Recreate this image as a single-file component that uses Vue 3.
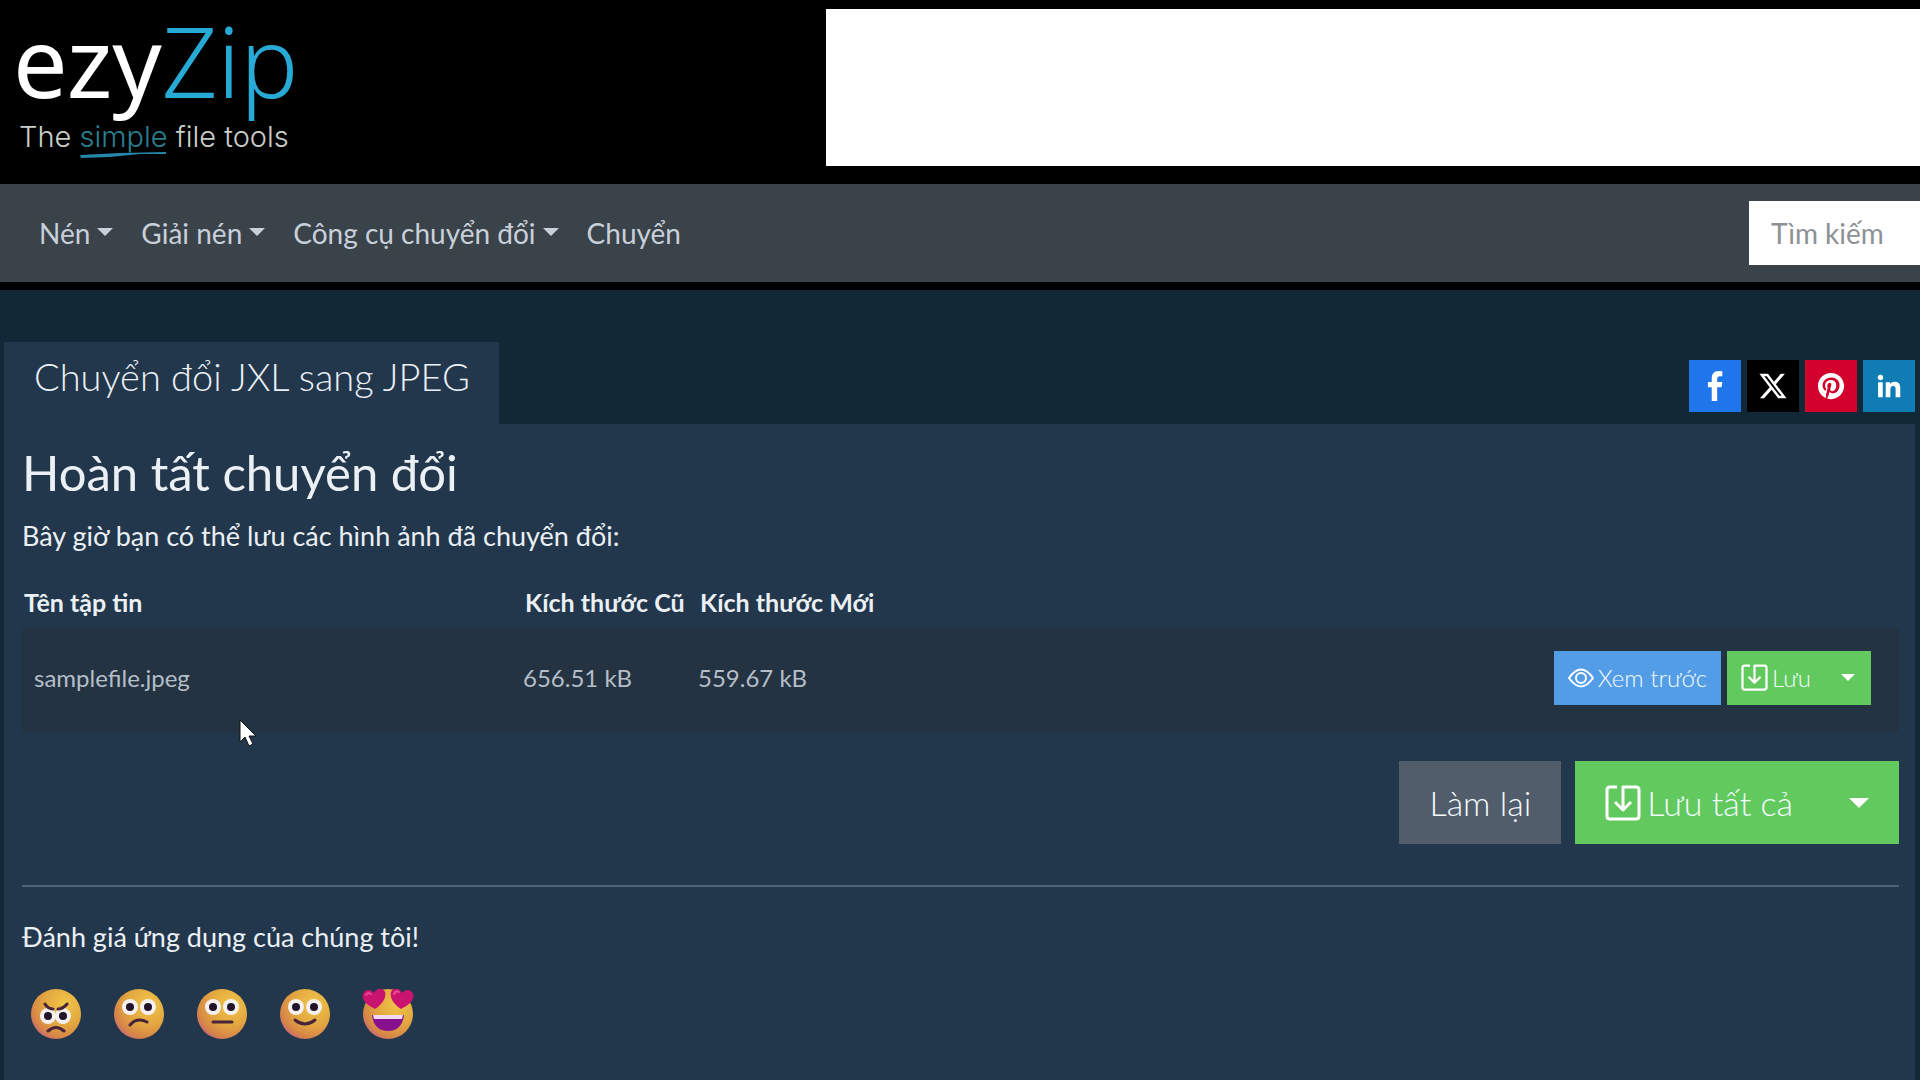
<template>
  <div class="page">
    <header class="header">
      <a class="logo" href="#" aria-label="ezyZip">
        <span class="logo-name">ezy<span class="logo-zip">Zip</span></span>
        <span class="logo-tagline">The <span class="logo-simple">simple<svg class="logo-stroke" viewBox="0 0 86 8" preserveAspectRatio="none" aria-hidden="true">
          <path d="M1 4 L40 2 L85 1 L85 3 L60 3 L30 6 L2 7 Z" fill="#2487ab" />
        </svg></span> file tools</span>
      </a>
      <div class="banner"></div>
    </header>

    <nav class="navbar">
      <ul class="menu">
        <li v-for="item in menu" :key="item.label">
          <a href="#" class="menu-link" :class="{ dropdown: item.dropdown }">{{ item.label }}</a>
        </li>
      </ul>
      <input class="search" type="search" placeholder="Tìm kiếm" aria-label="Tìm kiếm" />
    </nav>

    <main class="main">
      <div class="tab-row">
        <h1 class="tab">Chuyển đổi JXL sang JPEG</h1>
        <div class="share">
          <a v-for="s in socials" :key="s.name" href="#" class="share-link" :class="s.name" :aria-label="s.name">
            <svg :viewBox="s.box" aria-hidden="true"><path :d="s.path" fill="#fff" /></svg>
          </a>
        </div>
      </div>

      <section class="panel">
        <h2 class="title">Hoàn tất chuyển đổi</h2>
        <p class="lead">Bây giờ bạn có thể lưu các hình ảnh đã chuyển đổi:</p>

        <table class="files">
          <thead>
            <tr>
              <th class="col-name">Tên tập tin</th>
              <th class="col-old">Kích thước Cũ</th>
              <th class="col-new">Kích thước Mới</th>
              <th></th>
            </tr>
          </thead>
          <tbody>
            <tr v-for="file in files" :key="file.name">
              <td class="file-name">{{ file.name }}</td>
              <td>{{ file.oldSize }}</td>
              <td>{{ file.newSize }}</td>
              <td>
                <div class="row-actions">
                  <button class="btn btn-blue">
                    <svg class="icon-eye" viewBox="0 0 26 20" aria-hidden="true">
                      <path d="M1 10 Q13 -7 25 10 Q13 27 1 10 Z" />
                      <circle cx="13" cy="10" r="5" />
                    </svg>
                    Xem trước
                  </button>
                  <div class="btn-group">
                    <button class="btn btn-green">
                      <svg class="icon-save" viewBox="0 0 36 36" aria-hidden="true"><path :d="savePath" /></svg>
                      Lưu
                    </button>
                    <button class="btn btn-green btn-caret" aria-label="Tùy chọn lưu"></button>
                  </div>
                </div>
              </td>
            </tr>
          </tbody>
        </table>

        <div class="actions">
          <button class="btn btn-lg btn-gray">Làm lại</button>
          <div class="btn-group">
            <button class="btn btn-lg btn-green">
              <svg class="icon-save" viewBox="0 0 36 36" aria-hidden="true"><path :d="savePath" /></svg>
              Lưu tất cả
            </button>
            <button class="btn btn-lg btn-green btn-caret" aria-label="Tùy chọn lưu tất cả"></button>
          </div>
        </div>

        <hr class="divider" />

        <p class="rate-label">Đánh giá ứng dụng của chúng tôi!</p>
        <div class="ratings">
          <button v-for="mood in moods" :key="mood.name" class="mood" :aria-label="mood.name">
            <svg viewBox="0 0 52 52" aria-hidden="true">
              <defs>
                <radialGradient :id="'face-' + mood.name" cx="0.68" cy="0.3" r="0.8">
                  <stop offset="0" stop-color="#f0c648" />
                  <stop offset="0.55" stop-color="#e2a540" />
                  <stop offset="0.85" stop-color="#d68448" />
                  <stop offset="1" stop-color="#c06580" />
                </radialGradient>
              </defs>
              <circle cx="26" cy="26" r="25" :fill="`url(#face-${mood.name})`" />
              <template v-if="mood.eyes">
                <g v-for="x in mood.eyes" :key="x">
                  <circle :cx="x" :cy="mood.eyeY" r="8" fill="#f5f0f0" />
                  <circle :cx="x" :cy="mood.eyeY" r="4" fill="#21142b" />
                </g>
              </template>
              <g v-else>
                <path d="M13 21 C5 17 -1 12 1 6 C3 1 9 1 12 5 C14 0 21 -1 23 4 C25 11 18 18 13 21 Z" fill="#c9136f" />
                <path d="M39 21 C34 18 27 11 29 4 C31 -1 38 0 40 5 C43 1 49 1 51 6 C53 12 47 17 39 21 Z" fill="#c9136f" />
                <path d="M4 7 Q6 4 9 6 M32 6 Q34 2 37 4" fill="none" stroke="#ea4a94" stroke-width="2" stroke-linecap="round" />
                <path d="M10 27 H42 Q40 43 26 43 Q12 43 10 27 Z" fill="#86108d" />
                <path d="M11 27 H41 L40 31 H12 Z" fill="#f1dcf2" />
              </g>
              <path :d="mood.lines" fill="none" stroke="#47243a" stroke-width="3" stroke-linecap="round" />
            </svg>
          </button>
        </div>
      </section>
    </main>

    <svg class="pointer" viewBox="0 0 18 28" aria-hidden="true">
      <path d="M1 1 V23 L6 18 L10 27 L14 25 L10 17 H17 Z" fill="#fff" stroke="#111" stroke-width="1" />
    </svg>
  </div>
</template>

<script setup>
const menu = [
  { label: 'Nén', dropdown: true },
  { label: 'Giải nén', dropdown: true },
  { label: 'Công cụ chuyển đổi', dropdown: true },
  { label: 'Chuyển', dropdown: false },
]

const files = [
  { name: 'samplefile.jpeg', oldSize: '656.51 kB', newSize: '559.67 kB' },
]

const savePath = 'M12 2 H5 Q2 2 2 5 V31 Q2 34 5 34 H31 Q34 34 34 31 V5 Q34 2 31 2 H18 V24 M10 17 L18 25 L26 17'

const socials = [
  {
    name: 'facebook',
    box: '2 2 28 28',
    path: 'M17.600 27V17h3.200l.6-4h-3.800v-2.200c0-1.400.6-2 2-2h1.800V5.200C20.800 5.100 19.800 5 18.700 5 15.400 5 13.600 7 13.600 10.400V13h-2.800v4h2.800v10Z',
  },
  {
    name: 'x',
    box: '2 2 28 28',
    path: 'M21.751 7h3.067l-6.700 7.658L26 25.078h-6.172l-4.833-6.320-5.531 6.320h-3.070l7.167-8.190L6 7h6.328l4.370 5.777L21.750 7Zm-1.076 16.242h1.700L11.404 8.740H9.580l11.094 14.503Z',
  },
  {
    name: 'pinterest',
    box: '0 0 32 32',
    path: 'M16 5C9.900 5 5 9.900 5 16c0 4.600 2.900 8.600 6.900 10.200-.1-.9-.2-2.200 0-3.200l1.300-5.500s-.3-.7-.3-1.600c0-1.500.9-2.700 2-2.700.9 0 1.400.7 1.400 1.600 0 .9-.6 2.300-.9 3.600-.3 1.100.5 2 1.600 2 1.900 0 3.400-2 3.400-5 0-2.600-1.900-4.400-4.500-4.400-3.100 0-4.900 2.300-4.900 4.700 0 .9.400 1.900.8 2.500.1.100.1.200.1.300l-.3 1.300c0 .2-.2.300-.4.200-1.400-.7-2.300-2.700-2.300-4.400 0-3.500 2.600-6.800 7.400-6.800 3.900 0 6.900 2.800 6.900 6.400 0 3.900-2.400 7-5.800 7-1.100 0-2.200-.6-2.600-1.300l-.7 2.700c-.3 1-.9 2.200-1.400 3 1 .3 2.100.5 3.300.5 6.100 0 11-4.900 11-11S22.100 5 16 5Z',
  },
  {
    name: 'linkedin',
    box: '-1 -1 34 34',
    path: 'M6.227 12.610h4.190v13.480h-4.190V12.610zm2.095-6.700a2.430 2.430 0 0 1 0 4.860c-1.344 0-2.428-1.090-2.428-2.430s1.084-2.430 2.428-2.430m4.720 6.700h4.020v1.840h.058c.56-1.058 1.927-2.176 3.965-2.176 4.238 0 5.020 2.792 5.020 6.420v7.395h-4.183v-6.560c0-1.564-.03-3.574-2.178-3.574-2.180 0-2.514 1.700-2.514 3.460v6.668h-4.187V12.610z',
  },
]

const moods = [
  { name: 'angry', eyes: [18, 33], eyeY: 28, lines: 'M15 16 Q18 21 23 21 M37 16 Q33 21 28 21 M18 43 Q26 36 34 43' },
  { name: 'sad', eyes: [17, 35], eyeY: 19, lines: 'M17 37 Q24 29 34 34' },
  { name: 'neutral', eyes: [17, 35], eyeY: 19, lines: 'M17 34 H36' },
  { name: 'happy', eyes: [17, 35], eyeY: 19, lines: 'M16 32 Q26 40 36 32' },
  { name: 'love', eyes: null, eyeY: 0, lines: '' },
]
</script>

<style>
body {
  background: #132836;
}
</style>

<style scoped>
.page {
  position: relative;
  display: flex;
  flex-direction: column;
  min-height: 100vh;
  font-family: Lato, 'Noto Sans', sans-serif;
  color: #ebf0f5;
}

.page * {
  box-sizing: border-box;
}

/* Header */
.header {
  display: flex;
  justify-content: space-between;
  padding: 9px 0 18px;
  background: #000;
}

.logo {
  display: flex;
  flex-direction: column;
  padding-left: 13px;
  color: #fff;
  text-decoration: none;
  white-space: nowrap;
}

.logo-name {
  font-family: 'Noto Sans', sans-serif;
  font-size: 97px;
  line-height: 102px;
}

.logo-zip {
  font-weight: 300;
  color: #27aad6;
}

.logo-tagline {
  margin-top: 10px;
  padding-left: 6px;
  font-family: Inter, sans-serif;
  font-size: 29px;
  font-weight: 300;
  line-height: 32px;
  color: #c9cec8;
}

.logo-simple {
  position: relative;
  color: #2a7f8f;
}

.logo-stroke {
  position: absolute;
  left: 0;
  bottom: -5px;
  width: 100%;
  height: 8px;
}

.banner {
  width: 57%;
  min-height: 157px;
  background: #fff;
}

/* Navigation */
.navbar {
  display: flex;
  align-items: center;
  justify-content: space-between;
  padding: 17px 0;
  border-bottom: 8px solid #000;
  background: #3a424a;
}

.menu {
  display: flex;
  gap: 28px;
  margin: 0;
  padding: 0 0 0 39px;
  list-style: none;
}

.menu-link {
  font-size: 28px;
  line-height: 40px;
  color: #c8d0da;
  text-decoration: none;
}

.menu-link.dropdown::after {
  content: '';
  display: inline-block;
  margin-left: 7px;
  vertical-align: 8px;
  border: 8px solid transparent;
  border-top-color: #c8d0da;
  border-bottom: 0;
}

.search {
  width: 171px;
  height: 64px;
  padding: 0 0 0 22px;
  border: 0;
  border-radius: 0;
  background: #fff;
  font-family: inherit;
  font-size: 28px;
  color: #333;
}

.search::placeholder {
  color: #8c9196;
  opacity: 1;
}

/* Tool panel */
.main {
  display: flex;
  flex: 1;
  flex-direction: column;
  padding: 52px 5px 0 4px;
}

.tab-row {
  display: flex;
  justify-content: space-between;
}

.tab {
  margin: 0;
  padding: 10px 29px 24px 30px;
  background: #22374c;
  font-size: 38px;
  font-weight: 300;
  line-height: 48px;
}

.share {
  display: flex;
  gap: 6px;
  padding-top: 18px;
}

.share-link {
  display: flex;
  align-items: center;
  justify-content: center;
  width: 52px;
  height: 52px;
}

.share-link svg {
  width: 38px;
  height: 38px;
}

.facebook { background: #1f75ea; }
.x { background: #000; }
.pinterest { background: #d3022c; }
.linkedin { background: #0f7cb3; }

.panel {
  flex: 1;
  padding: 18px 16px 0 18px;
  background: #22374c;
}

.title {
  margin: 0;
  font-size: 49px;
  font-weight: 400;
  line-height: 60px;
}

.lead,
.rate-label {
  margin: 0;
  font-size: 27px;
  line-height: 40px;
}

.lead {
  margin-top: 14px;
}

.files {
  width: 100%;
  margin-top: 24px;
  border-collapse: collapse;
  table-layout: fixed;
  font-size: 24px;
  line-height: 32px;
}

.files th {
  padding: 6px 0 10px 2px;
  font-size: 25px;
  font-weight: 700;
  text-align: left;
  white-space: nowrap;
}

.col-name { width: 501px; }
.col-old { width: 175px; }
.col-new { width: 200px; }

.files td {
  height: 105px;
  padding: 0 0 6px;
  background: #243341;
  color: #b4bec9;
}

.files .file-name {
  padding-left: 12px;
}

.row-actions {
  display: flex;
  justify-content: flex-end;
  gap: 6px;
  padding-right: 28px;
}

.btn-group {
  display: flex;
}

.btn {
  display: flex;
  align-items: center;
  gap: 4px;
  height: 54px;
  padding: 0 14px;
  border: 0;
  font-family: inherit;
  font-size: 24px;
  font-weight: 300;
  color: #f4fbff;
  white-space: nowrap;
  cursor: pointer;
}

.btn-lg {
  height: 83px;
  padding: 0 30px;
  gap: 6px;
  font-size: 34px;
}

.btn-blue { background: #529de5; }
.btn-green { background: #62c95f; }
.btn-gray { background: #515d6a; }

.btn-caret {
  padding: 0 16px;
}

.btn-caret::before {
  content: '';
  border: 7px solid transparent;
  border-top-color: #fff;
  border-bottom: 0;
}

.btn-lg.btn-caret {
  padding: 0 30px 0 26px;
}

.btn-lg.btn-caret::before {
  border-width: 10px 10px 0;
}

.btn svg {
  flex-shrink: 0;
  fill: none;
  stroke: #fff;
}

.icon-eye {
  width: 26px;
  height: 20px;
  stroke-width: 2;
}

.icon-save {
  width: 27px;
  height: 27px;
  stroke-width: 3;
  stroke-linejoin: round;
}

.btn-lg .icon-save {
  width: 36px;
  height: 36px;
}

.actions {
  display: flex;
  justify-content: flex-end;
  gap: 14px;
  margin-top: 28px;
}

.divider {
  height: 2px;
  margin: 41px 0 0;
  border: 0;
  background: #4d6272;
}

.rate-label {
  margin-top: 30px;
}

.ratings {
  display: flex;
  gap: 31px;
  padding: 31px 0 24px 8px;
}

.mood {
  width: 52px;
  height: 52px;
  padding: 0;
  border: 0;
  background: none;
  cursor: pointer;
}

.mood svg {
  display: block;
  width: 100%;
  height: 100%;
}

/* Mouse pointer over the page */
.pointer {
  position: absolute;
  left: 239px;
  top: 719px;
  width: 18px;
  height: 28px;
}
</style>
